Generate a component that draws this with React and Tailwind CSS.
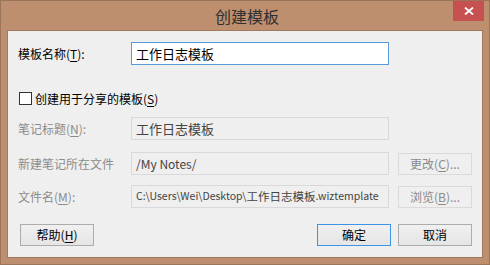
import React from 'react';

const font = { fontFamily: '"Noto Sans CJK SC", "Microsoft YaHei", sans-serif' };

// label with an underlined access key, e.g. 模板名称(T):
const Mn = ({ text, k, tail = '' }) => (
  <>
    {text}(<span className="underline underline-offset-2">{k}</span>){tail}
  </>
);

const Field = ({ value, focused, className = '' }) => (
  <div
    className={`h-[23px] w-[258px] flex items-center px-[4px] border text-[12px] leading-none whitespace-nowrap overflow-hidden ${
      focused ? 'border-[#5b9ad9] bg-white text-black' : 'border-[#d9d9d9] bg-[#efefef] text-[#444]'
    } ${className}`}
  >
    {value}
  </div>
);

const Btn = ({ children, primary, disabled, className = '' }) => (
  <div
    className={`h-[22px] w-[74px] flex items-center justify-center border text-[12px] leading-none ${
      disabled
        ? 'border-[#dadada] bg-[#efefef] text-[#8a8a8a]'
        : primary
        ? 'border-[#3c94e8] bg-gradient-to-b from-[#f0f0f0] to-[#e5e5e5] text-black'
        : 'border-[#acacac] bg-gradient-to-b from-[#f0f0f0] to-[#e5e5e5] text-black'
    } ${className}`}
  >
    {children}
  </div>
);

export default function App() {
  return (
    <div style={font} className="w-[490px] h-[265px] bg-[#be8f6f] border border-[#9b7559] flex flex-col px-[6px] pb-[6px] select-none">
      {/* title bar */}
      <div className="relative h-[29px] flex items-center justify-center shrink-0">
        <span className="text-[16px] text-[#2f2f2f] pl-[4px] leading-none">创建模板</span>
        <div className="absolute right-[-1px] top-0 w-[31px] h-[20px] bg-[#c75050] flex items-center justify-center">
          <svg width="10" height="8" viewBox="0 0 10 8">
            <path d="M1 0.5 L9 7.5 M9 0.5 L1 7.5" stroke="white" strokeWidth="1.8" />
          </svg>
        </div>
      </div>

      {/* client */}
      <div className="flex-1 border border-[#a07a5f] bg-[#efefef] pl-[10px] flex flex-col text-[12px]">
        <div className="flex items-center h-[23px] mt-[11px]">
          <span className="w-[113px] text-black">
            <Mn text="模板名称" k="T" tail=":" />
          </span>
          <Field value="工作日志模板" focused className="text-[13px]" />
        </div>

        <div className="flex items-center h-[13px] mt-[27px] ml-[1px]">
          <div className="w-[13px] h-[13px] border border-[#333] bg-white mr-[3px]" />
          <span className="text-black">
            <Mn text="创建用于分享的模板" k="S" />
          </span>
        </div>

        <div className="flex items-center h-[23px] mt-[12px]">
          <span className="w-[113px] text-[#8c8c8c]">
            <Mn text="笔记标题" k="N" tail=":" />
          </span>
          <Field value="工作日志模板" className="text-[13px] text-[#333]" />
        </div>

        <div className="flex items-center h-[23px] mt-[12px]">
          <span className="w-[113px] text-[#8c8c8c]">新建笔记所在文件</span>
          <Field value="/My Notes/" className="text-[11px]" />
          <Btn disabled className="ml-[9px]">
            <Mn text="更改" k="C" tail="..." />
          </Btn>
        </div>

        <div className="flex items-center h-[23px] mt-[10px]">
          <span className="w-[113px] text-[#8c8c8c]">
            <Mn text="文件名" k="M" tail=":" />
          </span>
          <Field
            value={
              <>
                <span className="text-[10.5px]">C:\Users\Wei\Desktop\</span>
                <span className="text-[11.5px]">工作日志模板</span>
                <span className="text-[10.5px]">.wiztemplate</span>
              </>
            }
          />
          <Btn disabled className="ml-[9px]">
            <Mn text="浏览" k="B" tail="..." />
          </Btn>
        </div>

        <div className="flex items-center h-[22px] mt-[16px] pr-[10px]">
          <Btn className="ml-[2px]">
            <Mn text="帮助" k="H" />
          </Btn>
          <div className="flex-1" />
          <Btn primary>确定</Btn>
          <Btn className="ml-[7px]">取消</Btn>
        </div>
      </div>
    </div>
  );
}
